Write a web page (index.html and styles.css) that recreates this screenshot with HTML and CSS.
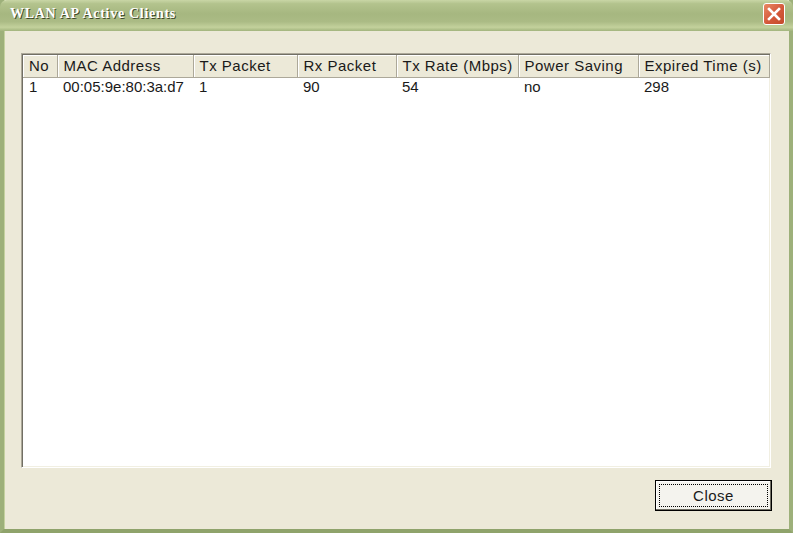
FILE: index.html
```
<!DOCTYPE html>
<html lang="en">
<head>
    <meta charset="UTF-8">
    <title>WLAN AP Active Clients</title>
    <link rel="stylesheet" href="styles.css">
</head>
<body>
    <div class="window">
        <div class="titlebar">
            <span class="title">WLAN AP Active Clients</span>
            <button class="close-x" aria-label="Close">
                <svg width="14" height="14" viewBox="0 0 14 14">
                    <path d="M2 2 L12 12 M12 2 L2 12" stroke="#fff" stroke-width="2.6" stroke-linecap="square"/>
                </svg>
            </button>
        </div>
        <div class="client">
            <div class="listview">
                <table class="clients">
                    <thead>
                        <tr>
                            <th class="c-no">No</th>
                            <th class="c-mac">MAC Address</th>
                            <th class="c-tx">Tx Packet</th>
                            <th class="c-rx">Rx Packet</th>
                            <th class="c-rate">Tx Rate (Mbps)</th>
                            <th class="c-ps">Power Saving</th>
                            <th class="c-exp">Expired Time (s)</th>
                        </tr>
                    </thead>
                    <tbody>
                        <tr>
                            <td>1</td>
                            <td>00:05:9e:80:3a:d7</td>
                            <td>1</td>
                            <td>90</td>
                            <td>54</td>
                            <td>no</td>
                            <td>298</td>
                        </tr>
                    </tbody>
                </table>
            </div>
            <div class="footer">
                <button class="button"><span class="focus">Close</span></button>
            </div>
        </div>
    </div>
</body>
</html>
```

FILE: styles.css
```
* {
    margin: 0;
    padding: 0;
    box-sizing: border-box;
}

body {
    width: 793px;
    height: 533px;
    overflow: hidden;
    background: #ECE9D8;
    font-family: "Liberation Sans", Arial, sans-serif;
    font-size: 15px;
    letter-spacing: 0.5px;
    color: #1a1a1a;
}

.window {
    width: 793px;
    height: 533px;
    display: flex;
    flex-direction: column;
    border-left: 4px solid #9DB07A;
    border-right: 4px solid #9DB07A;
    border-bottom: 4px solid #8FA36B;
    box-shadow: inset 1px 0 0 #C4D19F;
}

.titlebar {
    height: 31px;
    margin: 0 -4px;
    padding: 0 8px 0 10px;
    display: flex;
    align-items: center;
    justify-content: space-between;
    background: linear-gradient(#C9D6A6 0, #B3C38D 12%, #A6B780 45%, #ABBB85 70%, #C3D19C 88%, #A2B47D 100%);
    border-radius: 7px 7px 0 0;
}

.title {
    font-family: "Liberation Serif", "Times New Roman", serif;
    font-weight: bold;
    font-size: 14px;
    letter-spacing: 0.7px;
    color: #fff;
    text-shadow: 1px 1px 0 #404A2C;
    margin-top: -4px;
}

.close-x {
    width: 22px;
    height: 22px;
    margin-top: -4px;
    display: flex;
    align-items: center;
    justify-content: center;
    border: 1px solid #fff;
    border-radius: 3px;
    background: linear-gradient(135deg, #E98A64, #D4583A 55%, #C44A2C);
}

.client {
    flex: 1;
    display: flex;
    flex-direction: column;
    padding: 22px 18px 18px 17px;
}

.listview {
    flex: 1;
    background: #fff;
    border: 1px solid;
    border-color: #ACA899 #fff #fff #ACA899;
    box-shadow: inset 1px 1px 0 #716F64, inset -1px -1px 0 #F1EFE2;
    padding: 1px;
}

.clients {
    border-collapse: collapse;
    table-layout: fixed;
    width: 746px;
}

.clients th {
    height: 22px;
    background: #ECE9D8;
    font-weight: normal;
    text-align: left;
    padding: 0 0 0 6px;
    border-right: 1px solid #ACA899;
    border-bottom: 1px solid #ACA899;
    box-shadow: inset 1px 1px 0 #fff;
    white-space: nowrap;
}

.clients td {
    height: 17px;
    padding: 0 0 0 6px;
    vertical-align: top;
    white-space: nowrap;
    letter-spacing: 0;
}

.c-no { width: 34px; }
.c-mac { width: 136px; }
.c-tx { width: 104px; }
.c-rx { width: 99px; }
.c-rate { width: 122px; }
.c-ps { width: 120px; }
.c-exp { width: 131px; }

.footer {
    display: flex;
    justify-content: flex-end;
    padding-top: 12px;
}

.button {
    width: 117px;
    height: 31px;
    padding: 3px;
    background: #F4F3EE;
    border: 1px solid #000;
    box-shadow: inset -1px -1px 0 #716F64, inset 1px 1px 0 #fff;
    font-family: "Liberation Sans", Arial, sans-serif;
    font-size: 15px;
    letter-spacing: 0.5px;
    color: #1a1a1a;
    margin-right: -1px;
}

.focus {
    display: block;
    height: 100%;
    border: 1px dotted #000;
    line-height: 22px;
    text-align: center;
}
```
